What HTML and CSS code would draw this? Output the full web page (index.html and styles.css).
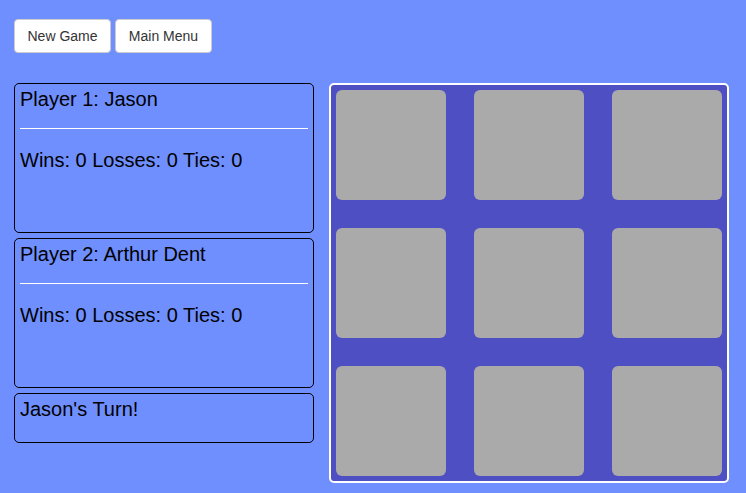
FILE: index.html
```html
<!DOCTYPE html>
<html>
<head>
<meta charset="utf-8">
<link rel="stylesheet" href="styles.css">
</head>
<body>
<div class="page">
  <div class="toolbar">
    <button class="btn">New Game</button>
    <button class="btn">Main Menu</button>
  </div>
  <div class="game">
    <div class="side">
      <div class="panel player">
        <div class="line">Player 1: Jason</div>
        <hr class="rule">
        <div class="line">Wins: 0 Losses: 0 Ties: 0</div>
      </div>
      <div class="panel player">
        <div class="line">Player 2: Arthur Dent</div>
        <hr class="rule">
        <div class="line">Wins: 0 Losses: 0 Ties: 0</div>
      </div>
      <div class="panel status">
        <div class="line">Jason's Turn!</div>
      </div>
    </div>
    <div class="board">
      <div class="cell"></div><div class="cell"></div><div class="cell"></div>
      <div class="cell"></div><div class="cell"></div><div class="cell"></div>
      <div class="cell"></div><div class="cell"></div><div class="cell"></div>
    </div>
  </div>
</div>
</body>
</html>
```

FILE: styles.css
```css
html, body {
  margin: 0;
  padding: 0;
  background: #6f8fff;
  font-family: "Liberation Sans", Arial, sans-serif;
}
.page {
  padding: 19px 14px 0 14px;
}
.toolbar {
  display: flex;
  gap: 4px;
  height: 34px;
}
.btn {
  font-family: "Liberation Sans", Arial, sans-serif;
  font-size: 14px;
  color: #333;
  background: #fff;
  border: 1px solid #ccc;
  border-radius: 4px;
  padding: 0 12px;
  height: 34px;
  line-height: 20px;
  width: 97px;
}
.game {
  display: flex;
  gap: 15px;
  margin-top: 30px;
  align-items: flex-start;
}
.side {
  width: 300px;
  display: flex;
  flex-direction: column;
  gap: 5px;
}
.panel {
  box-sizing: border-box;
  border: 1px solid #000;
  border-radius: 5px;
  padding: 4px 5px;
  color: #000;
  font-size: 20px;
}
.player {
  height: 150px;
}
.status {
  height: 50px;
}
.line {
  line-height: 23px;
}
.rule {
  border: 0;
  border-top: 1px solid #fff;
  height: 0;
  margin: 17px 0 20px 0;
}
.board {
  box-sizing: border-box;
  width: 400px;
  height: 400px;
  border: 2px solid #fff;
  border-radius: 5px;
  background: #4f4fc4;
  padding: 5px;
  display: grid;
  grid-template-columns: repeat(3, 110px);
  grid-template-rows: repeat(3, 110px);
  justify-content: space-between;
  align-content: space-between;
}
.cell {
  background: #aaaaaa;
  border-radius: 6px;
}
```
